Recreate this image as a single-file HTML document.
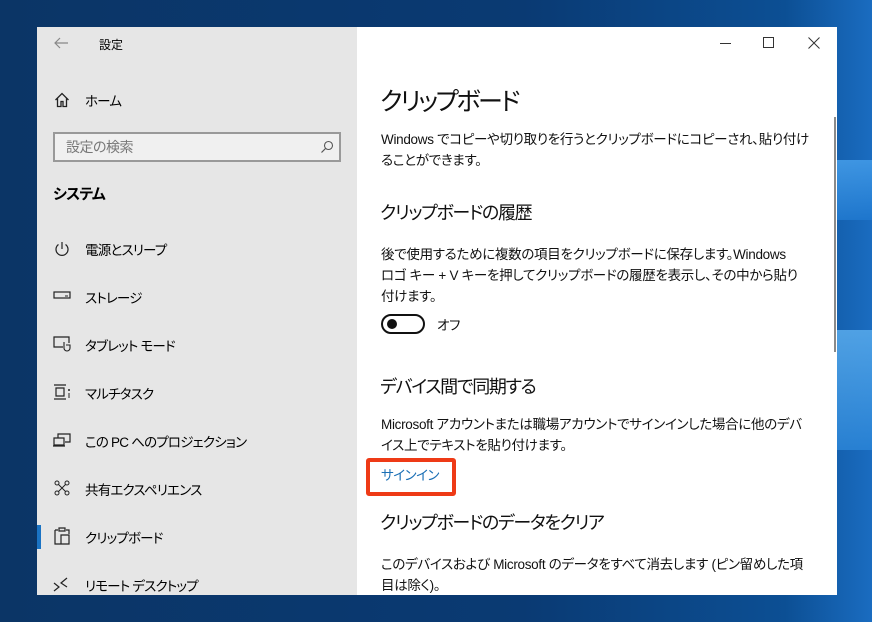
<!DOCTYPE html>
<html><head><meta charset="utf-8"><style>
*{margin:0;padding:0;box-sizing:border-box}
body{width:872px;height:622px;overflow:hidden;position:relative;font-family:"Liberation Sans","Noto Sans CJK JP",sans-serif;font-feature-settings:"palt";background:linear-gradient(90deg,#0b3566 0%,#0a3a73 60%,#0c4f94 90%,#1a6cc0 100%);}
.t{position:absolute;white-space:nowrap;color:#000;font-feature-settings:"palt"}
#win{position:absolute;left:37px;top:27px;width:800px;height:568px;background:#fff}
#side{position:absolute;left:0;top:0;width:320px;height:568px;background:#e6e6e6}
.ic{position:absolute;color:#222}
.item{font-size:13.5px;letter-spacing:-0.8px}
.b{font-size:13.5px;letter-spacing:-0.3px;color:#111}
.h{font-size:18px;letter-spacing:-1.3px;color:#111}
</style></head><body>
<div style="position:absolute;left:837px;top:160px;width:35px;height:60px;background:linear-gradient(170deg,#4aa3ee,#1e78d0);opacity:.8"></div>
<div style="position:absolute;left:837px;top:330px;width:35px;height:120px;background:linear-gradient(170deg,#5fb1f0,#2a85d8);opacity:.8"></div>
<div id="win">
<div id="side">
<svg class="ic" style="left:16px;top:10px" width="16" height="12" viewBox="0 0 16 12"><path d="M15 6H2M7 1L2 6l5 5" stroke="#888" fill="none" stroke-width="1.2"/></svg>
<div class="t" style="left:62px;top:9px;font-size:12px">設定</div>
<svg class="ic" style="left:17px;top:65px" width="16" height="16" viewBox="0 0 16 16"><path d="M1.5 8L8 1.5 14.5 8M3.5 6v8.5h3.5v-5h2v5h3.5V6" stroke="#222" fill="none" stroke-width="1.3"/></svg>
<div class="t item" style="left:48px;top:63px">ホーム</div>
<div style="position:absolute;left:16px;top:105px;width:288px;height:30px;border:2px solid #999;background:#f0f0f0"></div>
<div class="t" style="left:29px;top:110px;font-size:14px;color:#777;letter-spacing:-0.5px">設定の検索</div>
<svg class="ic" style="left:283px;top:113px" width="14" height="14" viewBox="0 0 14 14"><circle cx="8.5" cy="5.5" r="4" stroke="#555" fill="none" stroke-width="1.1"/><path d="M5.5 8.5L1.5 12.5" stroke="#555" stroke-width="1.2"/></svg>
<div class="t" style="left:16px;top:156px;font-size:15px;font-weight:bold;letter-spacing:-0.8px">システム</div>

<svg class="ic" style="left:17px;top:214px" width="16" height="16" viewBox="0 0 16 16"><path d="M8 1v7M4.5 3.5A6 6 0 1 0 11.5 3.5" stroke="#222" fill="none" stroke-width="1.2"/></svg>
<div class="t item" style="left:48px;top:212px">電源とスリープ</div>
<svg class="ic" style="left:16px;top:264px" width="18" height="8" viewBox="0 0 18 8"><rect x="1" y="1" width="16" height="6" stroke="#222" fill="none" stroke-width="1.2"/><path d="M12 5h3" stroke="#222"/></svg>
<div class="t item" style="left:48px;top:260px">ストレージ</div>
<svg class="ic" style="left:16px;top:309px" width="18" height="16" viewBox="0 0 18 16"><path d="M10 11H1V1h15v6" stroke="#222" fill="none" stroke-width="1.2"/><path d="M11 6v6a3 3 0 0 0 6 0v-3h-4" stroke="#222" fill="none" stroke-width="1.1"/></svg>
<div class="t item" style="left:48px;top:308px">タブレット モード</div>
<svg class="ic" style="left:16px;top:357px" width="18" height="16" viewBox="0 0 18 16"><path d="M1 1h12M1 15h12M3 4h8v8H3z" stroke="#222" fill="none" stroke-width="1.2"/><circle cx="16" cy="6" r="1" fill="#222"/><path d="M16 9v5" stroke="#222"/></svg>
<div class="t item" style="left:48px;top:356px">マルチタスク</div>
<svg class="ic" style="left:16px;top:406px" width="18" height="14" viewBox="0 0 18 14"><path d="M5 5V1h12v8h-5M1 5h10v7H1zM0 13h12" stroke="#222" fill="none" stroke-width="1.2"/></svg>
<div class="t item" style="left:48px;top:404px">この PC へのプロジェクション</div>
<svg class="ic" style="left:17px;top:453px" width="16" height="16" viewBox="0 0 16 16"><circle cx="3" cy="3" r="2" stroke="#222" fill="none"/><circle cx="13" cy="3" r="2" stroke="#222" fill="none"/><circle cx="3" cy="13" r="2" stroke="#222" fill="none"/><circle cx="13" cy="13" r="2" stroke="#222" fill="none"/><path d="M4.5 4.5l7 7M11.5 4.5l-7 7" stroke="#222"/></svg>
<div class="t item" style="left:48px;top:452px">共有エクスペリエンス</div>
<div style="position:absolute;left:0;top:498px;width:4px;height:24px;background:#1a73c4"></div>
<svg class="ic" style="left:17px;top:500px" width="16" height="18" viewBox="0 0 16 18"><path d="M1 3h3M12 3h3v4M1 3v14h6M5 1h6v3H5zM7 8h8v9H7z" stroke="#222" fill="none" stroke-width="1.2"/></svg>
<div class="t item" style="left:48px;top:500px">クリップボード</div>
<svg class="ic" style="left:16px;top:550px" width="16" height="16" viewBox="0 0 16 16"><path d="M1 6l5 4-5 4M14 1L8 6l6 4" stroke="#222" fill="none" stroke-width="1.2"/></svg>
<div class="t item" style="left:48px;top:548px">リモート デスクトップ</div>
</div>

<div style="position:absolute;left:683px;top:16px;width:11px;height:1px;background:#333"></div>
<div style="position:absolute;left:726px;top:10px;width:11px;height:11px;border:1px solid #333"></div>
<svg style="position:absolute;left:771px;top:10px" width="12" height="12" viewBox="0 0 12 12"><path d="M0.5 0.5l11 11M11.5 0.5l-11 11" stroke="#333"/></svg>
<div style="position:absolute;left:797px;top:90px;width:2px;height:235px;background:#8a8a8a"></div>

<div class="t" style="left:343px;top:55px;font-size:25px;letter-spacing:-2.3px;color:#111">クリップボード</div>
<div class="t b" style="left:344px;top:102px;line-height:21px">Windows でコピーや切り取りを行うとクリップボードにコピーされ、貼り付け<br>ることができます。</div>
<div class="t h" style="left:343px;top:172px">クリップボードの履歴</div>
<div class="t b" style="left:344px;top:217px;line-height:21px">後で使用するために複数の項目をクリップボードに保存します。Windows<br>ロゴ キー + V キーを押してクリップボードの履歴を表示し、その中から貼り<br>付けます。</div>
<div style="position:absolute;left:344px;top:287px;width:44px;height:20px;border:2px solid #111;border-radius:10px"></div>
<div style="position:absolute;left:350px;top:292px;width:10px;height:10px;border-radius:50%;background:#111"></div>
<div class="t b" style="left:400px;top:287px">オフ</div>
<div class="t h" style="left:343px;top:346px">デバイス間で同期する</div>
<div class="t b" style="left:344px;top:387px;line-height:21px">Microsoft アカウントまたは職場アカウントでサインインした場合に他のデバ<br>イス上でテキストを貼り付けます。</div>
<div style="position:absolute;left:329px;top:431px;width:90px;height:38px;border:4px solid #ee3a16;border-radius:3px"></div>
<div class="t" style="left:344px;top:437px;font-size:13.5px;letter-spacing:-0.5px;color:#1a6fb5">サインイン</div>
<div class="t h" style="left:343px;top:482px">クリップボードのデータをクリア</div>
<div class="t b" style="left:344px;top:527px;line-height:21px">このデバイスおよび Microsoft のデータをすべて消去します (ピン留めした項<br>目は除く)。</div>
</div>
</body></html>
